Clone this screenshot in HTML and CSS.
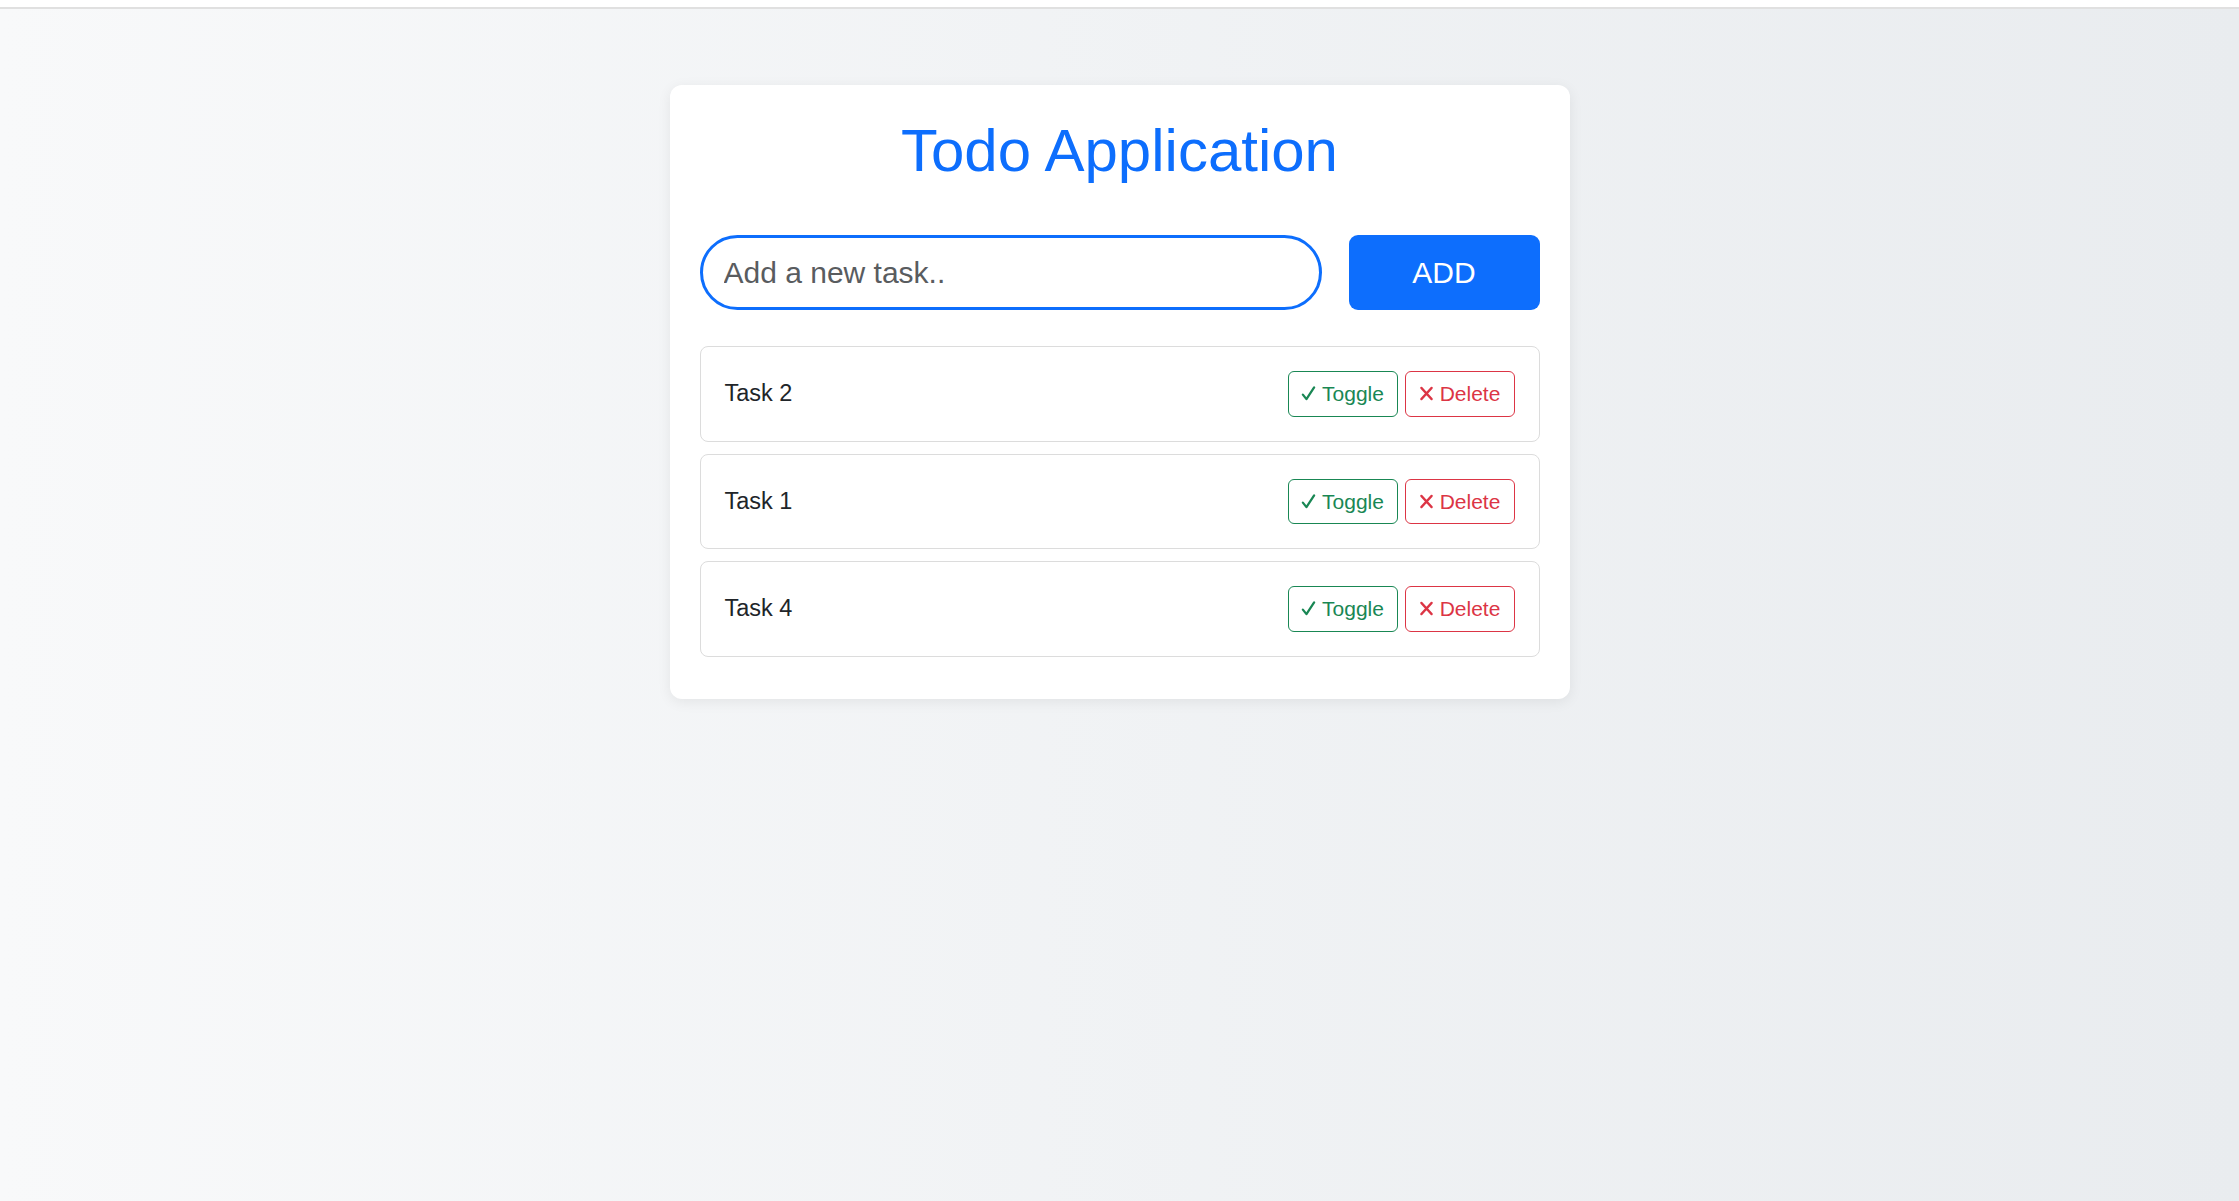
FILE: index.html
```html
<!DOCTYPE html>
<html lang="en">
<head>
<meta charset="utf-8">
<title>Todo Application</title>
<link rel="stylesheet" href="styles.css">
</head>
<body>
<div class="topbar"></div>
<main class="page">
  <section class="card">
    <h1 class="title">Todo Application</h1>
    <form class="add-row">
      <input class="task-input" type="text" placeholder="Add a new task..">
      <button class="add-btn" type="button">ADD</button>
    </form>
    <ul class="task-list">
      <li class="task-item">
        <span class="task-name">Task 2</span>
        <div class="actions">
          <button class="btn btn-toggle" type="button"><svg class="ico" viewBox="0 0 16 16"><path d="M2 9.2 L5.8 14 L14 1.5" fill="none" stroke="currentColor" stroke-width="2.4" stroke-linecap="round" stroke-linejoin="round"/></svg>Toggle</button>
          <button class="btn btn-delete" type="button"><svg class="ico" viewBox="0 0 16 16"><path d="M2.5 2 L13.5 14 M13.5 2 L2.5 14" fill="none" stroke="currentColor" stroke-width="2.4" stroke-linecap="round"/></svg>Delete</button>
        </div>
      </li>
      <li class="task-item">
        <span class="task-name">Task 1</span>
        <div class="actions">
          <button class="btn btn-toggle" type="button"><svg class="ico" viewBox="0 0 16 16"><path d="M2 9.2 L5.8 14 L14 1.5" fill="none" stroke="currentColor" stroke-width="2.4" stroke-linecap="round" stroke-linejoin="round"/></svg>Toggle</button>
          <button class="btn btn-delete" type="button"><svg class="ico" viewBox="0 0 16 16"><path d="M2.5 2 L13.5 14 M13.5 2 L2.5 14" fill="none" stroke="currentColor" stroke-width="2.4" stroke-linecap="round"/></svg>Delete</button>
        </div>
      </li>
      <li class="task-item">
        <span class="task-name">Task 4</span>
        <div class="actions">
          <button class="btn btn-toggle" type="button"><svg class="ico" viewBox="0 0 16 16"><path d="M2 9.2 L5.8 14 L14 1.5" fill="none" stroke="currentColor" stroke-width="2.4" stroke-linecap="round" stroke-linejoin="round"/></svg>Toggle</button>
          <button class="btn btn-delete" type="button"><svg class="ico" viewBox="0 0 16 16"><path d="M2.5 2 L13.5 14 M13.5 2 L2.5 14" fill="none" stroke="currentColor" stroke-width="2.4" stroke-linecap="round"/></svg>Delete</button>
        </div>
      </li>
    </ul>
  </section>
</main>
</body>
</html>
```
FILE: styles.css
```css
* { box-sizing: border-box; }
html, body { height: 100%; }
body {
  margin: 0;
  font-family: "Liberation Sans", Arial, sans-serif;
  background: linear-gradient(to right, #f8f9fa, #e9ecef);
  color: #212529;
  display: flex;
  flex-direction: column;
}
.topbar {
  height: 9px;
  background: #fff;
  border-bottom: 2px solid #e0e0e0;
  flex: none;
}
.page {
  flex: 1;
  display: flex;
  justify-content: center;
  align-items: flex-start;
  padding-top: 76px;
}
.card {
  width: 900px;
  background: #fff;
  border-radius: 12px;
  padding: 30px;
  box-shadow: 0 3px 14px rgba(0, 0, 0, 0.07);
}
.title {
  margin: 0 0 48px;
  text-align: center;
  font-size: 60px;
  font-weight: 400;
  line-height: 1.2;
  color: #0d6efd;
}
.add-row {
  display: flex;
  gap: 27px;
  margin: 0 0 36px;
}
.task-input {
  flex: 1;
  height: 75px;
  border: 3px solid #0d6efd;
  border-radius: 38px;
  padding: 0 21px;
  font-family: inherit;
  font-size: 30px;
  color: #212529;
  outline: none;
}
.task-input::placeholder { color: #595c5f; }
.add-btn {
  width: 191px;
  height: 75px;
  border: none;
  border-radius: 9px;
  background: #0d6efd;
  color: #fff;
  font-family: inherit;
  font-size: 30px;
}
.task-list {
  list-style: none;
  margin: 0;
  padding: 0;
}
.task-item {
  display: flex;
  align-items: center;
  justify-content: space-between;
  border: 1px solid #dcdcdc;
  border-radius: 8px;
  padding: 24px 24px;
  margin-bottom: 12px;
}
.task-name {
  font-size: 23.5px;
  color: #212529;
}
.actions {
  display: flex;
  gap: 7px;
}
.btn {
  width: 110px;
  display: flex;
  align-items: center;
  justify-content: center;
  gap: 6px;
  font-family: inherit;
  font-size: 21px;
  line-height: 1.5;
  padding: 6px 0;
  background: #fff;
  border: 1.5px solid;
  border-radius: 6px;
}
.ico {
  width: 15px;
  height: 15px;
  flex: none;
}
.btn-toggle { color: #198754; border-color: #198754; }
.btn-delete { color: #dc3545; border-color: #dc3545; }
```
